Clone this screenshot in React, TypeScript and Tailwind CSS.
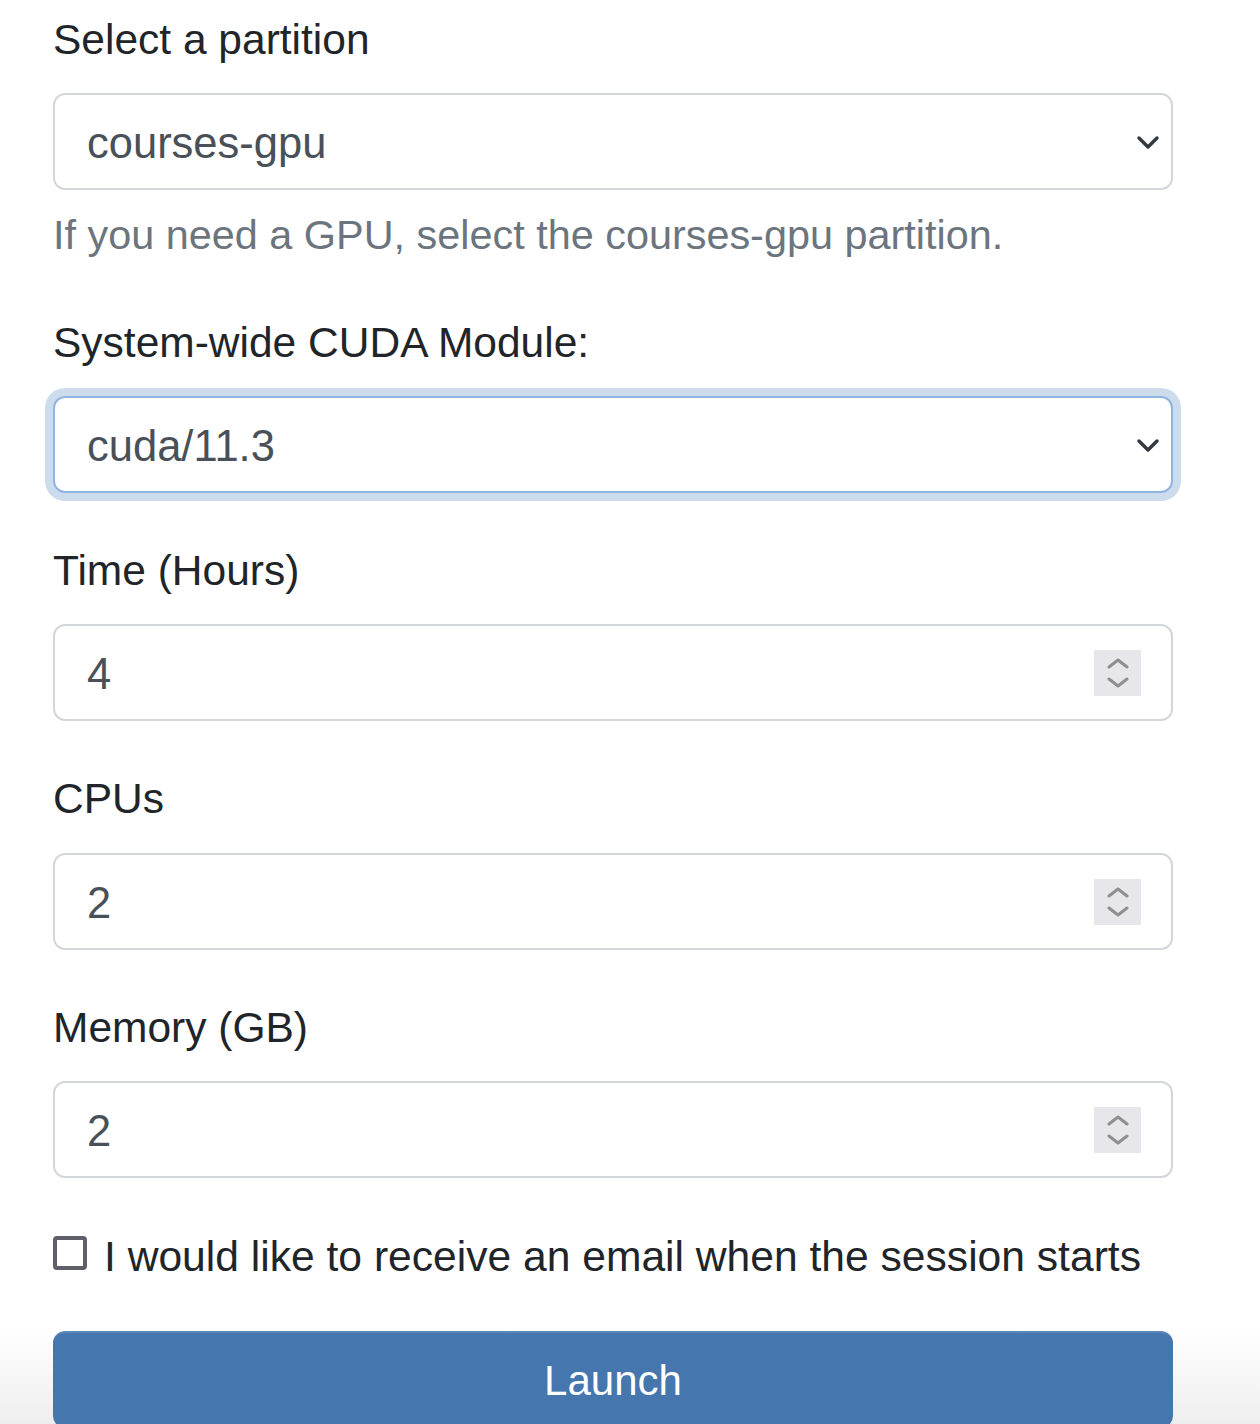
import React from "react";

const font = { fontFamily: '"Liberation Sans", Arial, sans-serif' };

function Chevron() {
    return (
        <svg width="24" height="16" viewBox="0 0 24 16" className="absolute right-[11px] top-1/2 -translate-y-1/2">
            <path d="M3 4 L12 13 L21 4" fill="none" stroke="#343a40" strokeWidth="3.5" strokeLinecap="round" strokeLinejoin="round" />
        </svg>
    );
}

function Spinner() {
    return (
        <div className="absolute right-[30px] top-1/2 -translate-y-1/2 w-[47px] h-[46px] bg-[#e6e6eb] flex flex-col items-center justify-center gap-[8px]">
            <svg width="22" height="11" viewBox="0 0 22 11">
                <path d="M2 9 L11 2 L20 9" fill="none" stroke="#8e8e93" strokeWidth="3" strokeLinecap="round" strokeLinejoin="round" />
            </svg>
            <svg width="22" height="11" viewBox="0 0 22 11">
                <path d="M2 2 L11 9 L20 2" fill="none" stroke="#8e8e93" strokeWidth="3" strokeLinecap="round" strokeLinejoin="round" />
            </svg>
        </div>
    );
}

function Label({ children, className = "" }: { children: React.ReactNode; className?: string }) {
    return <label className={`block text-[42.5px] leading-[50px] text-[#212529] ${className}`}>{children}</label>;
}

function Field({ value, kind, focused }: { value: string; kind: "select" | "number"; focused?: boolean }) {
    return (
        <div
            className={`relative h-[97px] shrink-0 rounded-[12px] border-2 bg-white flex items-center pl-[32px] ${
                focused ? "border-[#8fb4e0] shadow-[0_0_0_8px_#cddcec]" : "border-[#d3d6da]"
            }`}
        >
            <span className="text-[43.5px] text-[#495057] translate-y-[2px]">{value}</span>
            {kind === "select" ? <Chevron /> : <Spinner />}
        </div>
    );
}

export default function App() {
    return (
        <main
            className="w-[1260px] h-[1424px] overflow-hidden bg-[linear-gradient(to_bottom,#ffffff_1330px,#eeeeee_1424px)]"
            style={font}
        >
            <div className="w-[1120px] ml-[53px] pt-[15px] flex flex-col">
                {/* partition */}
                <Label className="mb-[28px]">Select a partition</Label>
                <Field value="courses-gpu" kind="select" />
                <p className="mt-[20px] text-[41.4px] leading-[50px] text-[#6c757d]">
                    If you need a GPU, select the courses-gpu partition.
                </p>

                {/* cuda */}
                <Label className="mt-[58px] mb-[28px]">System-wide CUDA Module:</Label>
                <Field value="cuda/11.3" kind="select" focused />

                {/* time */}
                <Label className="mt-[53px] mb-[28px]">Time (Hours)</Label>
                <Field value="4" kind="number" />

                {/* cpus */}
                <Label className="mt-[53px] mb-[29px]">CPUs</Label>
                <Field value="2" kind="number" />

                {/* memory */}
                <Label className="mt-[53px] mb-[28px]">Memory (GB)</Label>
                <Field value="2" kind="number" />

                {/* email */}
                <div className="mt-[53px] flex items-center h-[50px]">
                    <span className="w-[34px] h-[34px] border-[4px] border-[#5f5f6a] rounded-[4px] bg-white mr-[17px] -translate-y-[3px]" />
                    <span className="text-[42.6px] leading-[50px] text-[#212529]">
                        I would like to receive an email when the session starts
                    </span>
                </div>

                {/* launch */}
                <button className="mt-[50px] h-[97px] shrink-0 rounded-[12px] bg-[#4576ae] border-t-2 border-[#5b87bb] text-white text-[42px]">
                    Launch
                </button>
            </div>
        </main>
    );
}
